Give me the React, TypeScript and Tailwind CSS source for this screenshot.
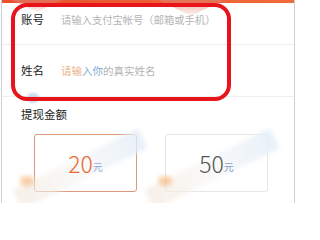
export default function App() {
  const font = { fontFamily: '"Noto Sans CJK SC", "Noto Sans", sans-serif' };
  return (
    <div className="relative w-[303px] h-[203px] overflow-hidden bg-white" style={font}>
      <div className="ml-[1px] w-[294px] h-full border-x border-[#cfcfcf] bg-white">
        {/* top bar */}
        <div className="h-[3px] bg-gradient-to-r from-[#e9502c] to-[#f06a3a]" />

        {/* account row */}
        <div className="flex items-center h-[42px] pb-[8px] pl-[19px] border-b border-[#efefef]">
          <span className="w-[40px] text-[11.5px] text-[#222]">账号</span>
          <span className="text-[10.3px] text-[#b4b4b4]">请输入支付宝帐号（邮箱或手机）</span>
        </div>

        {/* name row */}
        <div className="flex items-center h-[52px] pl-[19px] border-b border-[#efefef]">
          <span className="w-[40px] text-[11.5px] text-[#222]">姓名</span>
          <span className="text-[10.5px] text-[#b4b4b4]">
            <span className="text-[#e8b48c]">请输</span>
            <span className="text-[#7fa9d6]">入你</span>的真实姓名
          </span>
        </div>

        {/* amount */}
        <div className="pl-[19px] pt-[9px] text-[11.5px] text-[#222] leading-[16px]">提现金额</div>
        <div className="flex gap-[28px] pl-[32px] pt-[12px]">
          <div className="flex items-center justify-center w-[103px] h-[58px] rounded-[3px] border border-[#d9997a]">
            <span className="relative z-10 text-[23px] leading-none font-light text-[#e8692e]">20</span>
            <span className="relative z-10 mt-[6px] text-[10px] text-[#8fb0d8]">元</span>
          </div>
          <div className="flex items-center justify-center w-[103px] h-[58px] rounded-[3px] border border-[#e6e6e6]">
            <span className="relative z-10 text-[23px] leading-none font-light text-[#555]">50</span>
            <span className="relative z-10 mt-[6px] text-[10px] text-[#7fa0c8]">元</span>
          </div>
        </div>
      </div>

      {/* watermark shapes at the top */}
      <div className="absolute left-[12px] top-0 w-[50px] h-[12px] bg-gradient-to-b from-[#e07a6a]/70 to-[#f3c9c0]/10 [clip-path:polygon(0_0,100%_0,50%_100%)]" />
      <div className="absolute left-[158px] top-0 w-[66px] h-[16px] bg-gradient-to-b from-[#e07a6a]/70 to-[#f3c9c0]/10 [clip-path:polygon(0_0,100%_0,50%_100%)]" />
      <div className="absolute left-[27px] top-[93px] w-[12px] h-[10px] rounded-full bg-[#a9c2e6]/60 blur-[1px]" />

      {/* watermark streaks over the cards */}
      <div className="absolute left-[10px] top-[158px] w-[140px] h-[22px] -rotate-[26deg] bg-gradient-to-r from-[#f3e6da]/60 via-[#f7f7f7]/70 to-[#e2edf7]/80 blur-[2px]" />
      <div className="absolute left-[142px] top-[158px] w-[140px] h-[22px] -rotate-[26deg] bg-gradient-to-r from-[#f3e6da]/60 via-[#f7f7f7]/70 to-[#e2edf7]/80 blur-[2px]" />
      <div className="absolute left-[20px] top-[176px] w-[14px] h-[10px] rounded-full bg-[#f5b477]/60 blur-[2px]" />
      <div className="absolute left-[158px] top-[176px] w-[14px] h-[10px] rounded-full bg-[#f5b477]/60 blur-[2px]" />

      {/* red annotation */}
      <div className="absolute left-[11px] top-[3px] w-[220px] h-[98px] rounded-[16px] border-[4px] border-[#e8141c]" />
    </div>
  );
}
